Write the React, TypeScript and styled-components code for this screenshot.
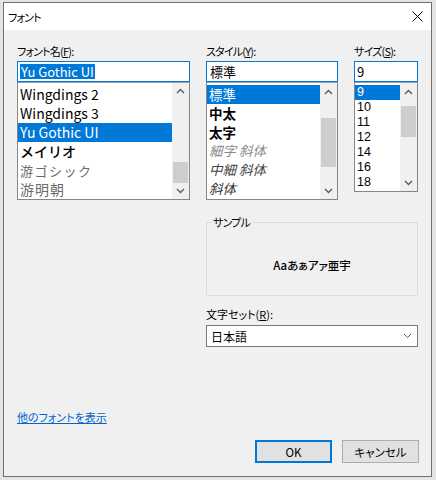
import styled, { createGlobalStyle } from 'styled-components'

const GlobalStyle = createGlobalStyle`
  html, body {
    margin: 0;
    padding: 0;
    background: #e4e4e4;
  }
  body {
    font-family: 'Noto Sans CJK JP', 'Noto Sans', sans-serif;
    font-size: 11px;
    font-feature-settings: 'palt';
    color: #000;
  }
`

const Page = styled.div`
  width: 436px;
  height: 480px;
  padding: 2px 0 0 3px;
  box-sizing: border-box;
`

const Window = styled.div`
  width: 429px;
  height: 475px;
  border: 1px solid #707070;
  background: #f0f0f0;
  box-sizing: border-box;
  display: flex;
  flex-direction: column;
`

const TitleBar = styled.div`
  height: 27px;
  background: #fff;
  display: flex;
  align-items: center;
  justify-content: space-between;
  padding: 0 8px 0 4px;
  letter-spacing: -0.8px;
`

const Content = styled.div`
  flex: 1;
  padding: 13px 12px 13px 13px;
  display: flex;
  flex-direction: column;
`

const Grid = styled.div`
  display: grid;
  grid-template-columns: 173px 132px 64px;
  column-gap: 16px;
  align-items: start;
`

const Column = styled.div`
  display: flex;
  flex-direction: column;
`

const Label = styled.div<{ $tight?: boolean }>`
  height: 16px;
  line-height: 16px;
  margin-bottom: 2px;
  white-space: nowrap;
  letter-spacing: ${(p) => (p.$tight ? -0.8 : 0)}px;
`

const Key = styled.span`
  text-decoration: underline;
`

const TextBox = styled.div<{ $pad?: number }>`
  height: 21px;
  border: 1px solid #0078d7;
  background: #fff;
  box-sizing: border-box;
  padding: 0 ${(p) => p.$pad ?? 2}px;
  display: flex;
  align-items: center;
  font-size: 13px;
`

const Selected = styled.span`
  background: #0078d7;
  color: #fff;
  line-height: 15px;
  padding: 0 1px;
  font-feature-settings: normal;
`

const ListBox = styled.div<{ $height: number }>`
  height: ${(p) => p.$height}px;
  border: 1px solid #828790;
  border-top-color: #a0a0a0;
  background: #fff;
  box-sizing: border-box;
  display: flex;
`

const Items = styled.div<{ $pad: number }>`
  flex: 1;
  overflow: hidden;
  padding-top: ${(p) => p.$pad}px;
  font-feature-settings: normal;
`

const Item = styled.div<{
  $h: number
  $size: number
  $sel?: boolean
  $color?: string
  $weight?: number
  $italic?: boolean
  $spacing?: number
  $latin?: boolean
}>`
  height: ${(p) => p.$h}px;
  line-height: ${(p) => p.$h}px;
  padding-left: 2px;
  white-space: nowrap;
  font-family: ${(p) =>
    p.$latin
      ? "'Liberation Sans', Arial, sans-serif"
      : "'Noto Sans CJK JP', 'Noto Sans', sans-serif"};
  font-size: ${(p) => p.$size}px;
  font-weight: ${(p) => p.$weight ?? 400};
  font-style: ${(p) => (p.$italic ? 'italic' : 'normal')};
  letter-spacing: ${(p) => p.$spacing ?? 0}px;
  background: ${(p) => (p.$sel ? '#0078d7' : 'transparent')};
  color: ${(p) => (p.$sel ? '#fff' : p.$color ?? '#000')};
`

const ScrollBar = styled.div`
  width: 17px;
  background: #f0f0f0;
  display: flex;
  flex-direction: column;
`

const ArrowButton = styled.div`
  height: 17px;
  display: flex;
  align-items: center;
  justify-content: center;
`

const Track = styled.div`
  flex: 1;
  display: flex;
  flex-direction: column;
`

const Thumb = styled.div<{ $offset: number; $size: number }>`
  margin: ${(p) => p.$offset}px 1px 0 1px;
  height: ${(p) => p.$size}px;
  background: #cdcdcd;
`

const RightArea = styled.div`
  grid-column: 2 / 4;
  display: flex;
  flex-direction: column;
`

const Group = styled.fieldset`
  margin: 15px 0 0 0;
  padding: 0;
  border: 1px solid #dcdcdc;
  min-width: 0;
`

const Legend = styled.legend`
  margin-left: 4px;
  padding: 0 3px 0 2px;
  line-height: 14px;
  letter-spacing: -0.8px;
`

const SampleArea = styled.div`
  height: 66px;
  padding-top: 6px;
  box-sizing: border-box;
  display: flex;
  align-items: center;
  justify-content: center;
  font-size: 11.5px;
  font-weight: 500;
`

const CharsetLabel = styled(Label)`
  margin: 10px 0 3px;
`

const Select = styled.div`
  height: 22px;
  border: 1px solid #7a7a7a;
  background: #fff;
  box-sizing: border-box;
  padding: 0 5px 0 4px;
  display: flex;
  align-items: center;
  justify-content: space-between;
  font-size: 12px;
`

const Footer = styled.div`
  margin-top: auto;
  display: flex;
  flex-direction: column;
`

const Link = styled.a`
  align-self: flex-start;
  color: #0066cc;
  text-decoration: underline;
  line-height: 16px;
  cursor: pointer;
`

const ButtonRow = styled.div`
  margin-top: 15px;
  display: flex;
  justify-content: flex-end;
  gap: 10px;
`

const Button = styled.button<{ $default?: boolean }>`
  width: 77px;
  height: 23px;
  box-sizing: border-box;
  background: #e1e1e1;
  border: ${(p) => (p.$default ? '2px solid #0078d7' : '1px solid #adadad')};
  font-family: 'Noto Sans CJK JP', 'Noto Sans', sans-serif;
  font-feature-settings: 'palt';
  font-size: 11.5px;
  color: #000;
  padding: 0;
`

const Chevron = ({ up }: { up?: boolean }) => (
  <svg width="9" height="6" viewBox="0 0 9 6">
    <polyline
      points={up ? '1,5 4.5,1.5 8,5' : '1,1 4.5,4.5 8,1'}
      fill="none"
      stroke="#606060"
      strokeWidth="1.5"
    />
  </svg>
)

const Scroll = ({ offset, size }: { offset: number; size: number }) => (
  <ScrollBar>
    <ArrowButton>
      <Chevron up />
    </ArrowButton>
    <Track>
      <Thumb $offset={offset} $size={size} />
    </Track>
    <ArrowButton>
      <Chevron />
    </ArrowButton>
  </ScrollBar>
)

const CloseIcon = () => (
  <svg width="11" height="11" viewBox="0 0 11 11">
    <path d="M0.5 0.5 L10.5 10.5 M10.5 0.5 L0.5 10.5" stroke="#000" strokeWidth="1" />
  </svg>
)

const fonts = [
  { t: 'Wingdings 2' },
  { t: 'Wingdings 3' },
  { t: 'Yu Gothic UI', sel: true },
  { t: 'メイリオ', weight: 500 },
  { t: '游ゴシック', color: '#6a6a6a', spacing: 1.5, size: 13 },
  { t: '游明朝', color: '#6a6a6a', spacing: 1 },
]

const styles = [
  { t: '標準', sel: true },
  { t: '中太', weight: 700 },
  { t: '太字', weight: 700 },
  { t: '細字 斜体', italic: true, color: '#8a8a8a' },
  { t: '中細 斜体', italic: true, color: '#444' },
  { t: '斜体', italic: true, color: '#333' },
]

const sizes = ['9', '10', '11', '12', '14', '16', '18']

export default function App() {
  return (
    <Page>
      <GlobalStyle />
      <Window>
        <TitleBar>
          <span>フォント</span>
          <CloseIcon />
        </TitleBar>
        <Content>
          <Grid>
            <Column>
              <Label $tight>
                フォント名(<Key>F</Key>):
              </Label>
              <TextBox>
                <Selected>Yu Gothic UI</Selected>
              </TextBox>
              <ListBox $height={118}>
                <Items $pad={2}>
                  {fonts.map((f) => (
                    <Item
                      key={f.t}
                      $h={19}
                      $size={f.size ?? 14}
                      $sel={f.sel}
                      $color={f.color}
                      $weight={f.weight}
                      $spacing={f.spacing}
                    >
                      {f.t}
                    </Item>
                  ))}
                </Items>
                <Scroll offset={62} size={21} />
              </ListBox>
            </Column>
            <Column>
              <Label $tight>
                スタイル(<Key>Y</Key>):
              </Label>
              <TextBox $pad={3}>標準</TextBox>
              <ListBox $height={118}>
                <Items $pad={2}>
                  {styles.map((s) => (
                    <Item
                      key={s.t}
                      $h={18.8}
                      $size={13.5}
                      $sel={s.sel}
                      $color={s.color}
                      $weight={s.weight}
                      $italic={s.italic}
                    >
                      {s.t}
                    </Item>
                  ))}
                </Items>
                <Scroll offset={18} size={49} />
              </ListBox>
            </Column>
            <Column>
              <Label $tight>
                サイズ(<Key>S</Key>):
              </Label>
              <TextBox>9</TextBox>
              <ListBox $height={110}>
                <Items $pad={2}>
                  {sizes.map((s, i) => (
                    <Item key={s} $h={15} $size={12.5} $sel={i === 0} $latin>
                      {s}
                    </Item>
                  ))}
                </Items>
                <Scroll offset={6} size={31} />
              </ListBox>
            </Column>
            <RightArea>
              <Group>
                <Legend>サンプル</Legend>
                <SampleArea>Aaあぁアァ亜宇</SampleArea>
              </Group>
              <CharsetLabel>
                文字セット(<Key>R</Key>):
              </CharsetLabel>
              <Select>
                <span>日本語</span>
                <svg width="9" height="6" viewBox="0 0 9 6">
                  <polyline points="1,1 4.5,4.5 8,1" fill="none" stroke="#555" strokeWidth="1" />
                </svg>
              </Select>
            </RightArea>
          </Grid>
          <Footer>
            <Link>他のフォントを表示</Link>
            <ButtonRow>
              <Button $default>OK</Button>
              <Button>キャンセル</Button>
            </ButtonRow>
          </Footer>
        </Content>
      </Window>
    </Page>
  )
}
